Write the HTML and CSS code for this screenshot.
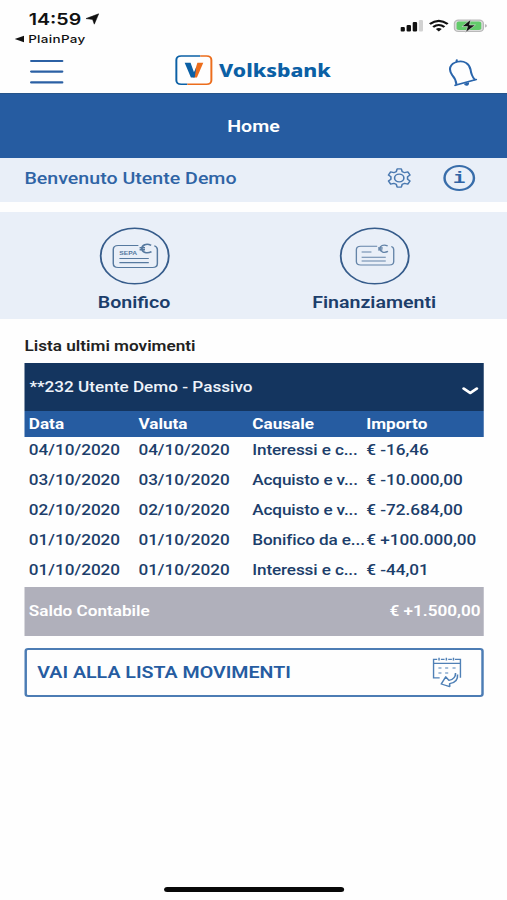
FILE: index.html
```
<!DOCTYPE html>
<html lang="it">
<head>
<meta charset="utf-8">
<meta name="viewport" content="width=device-width, initial-scale=1">
<title>Volksbank</title>
<link rel="stylesheet" href="styles.css">
</head>

<body>
<div class="screen">

  <div class="status">
    <div class="status-left">
      <div class="clock">14:59
        <svg width="11" height="12" viewBox="0 0 11 12"><path d="M0.2 5.6 L10.6 0.8 L7 11.2 L5.6 6.4 Z" fill="#111" stroke="#111" stroke-width="0.5"/></svg>
      </div>
      <div class="back">
        <svg width="8" height="8" viewBox="0 0 8 8"><path d="M0 4 L7.6 0.7 V7.3 Z" fill="#111"/></svg>
        PlainPay
      </div>
    </div>
    <svg class="status-icons" width="71" height="14" viewBox="0 0 71 14">
      <g fill="#111">
        <rect x="0" y="8" width="3.6" height="4.6" rx="1"/>
        <rect x="5" y="6" width="3.6" height="6.6" rx="1"/>
        <rect x="10" y="3" width="3.6" height="9.6" rx="1"/>
      </g>
      <rect x="15" y="1" width="3.4" height="11.6" rx="1" fill="#d2d2d2"/>
      <g fill="none" stroke="#111" stroke-width="2.1">
        <path d="M24 5 Q31.3 -1.4 38.6 5"/>
        <path d="M26.7 8 Q31.3 4 35.9 8"/>
      </g>
      <path d="M31.3 12.6 L28.9 10 Q31.3 8.2 33.7 10 Z" fill="#111"/>
      <rect x="44.1" y="1.1" width="23.6" height="11.4" rx="3.2" fill="#ddd" stroke="#b9b9b9" stroke-width="1.1"/>
      <rect x="45.8" y="2.6" width="20.2" height="8.4" rx="1.8" fill="#62cb6a"/>
      <path d="M69 5 Q70.6 5.4 70.6 6.8 Q70.6 8.2 69 8.6 Z" fill="#b9b9b9"/>
      <path d="M57.4 0.4 L50.2 7.6 H54.8 L53.2 13.4 L61.2 6 H56.4 Z" fill="#111" stroke="#eee" stroke-width="0.5"/>
    </svg>
  </div>

  <div class="topbar">
    <svg width="28" height="26" viewBox="0 0 28 26"><path d="M1.6 2H26.8 M1.6 12.6H26.8 M1.6 23.4H26.8" stroke="#2b60a4" stroke-width="2.2" stroke-linecap="round"/></svg>
    <div class="logo">
      <svg width="31" height="31" viewBox="0 0 31 31">
        <g fill="none" stroke-width="1.6">
          <path d="M20.5 1 H5 Q1 1 1 5 V25.3 Q1 29.3 5 29.3 H10" stroke="#0b60a5"/>
          <path d="M20.5 1 H25.6 Q29.6 1 29.6 5 V25.3 Q29.6 29.3 25.6 29.3 H10" stroke="#ec6d1c"/>
        </g>
        <path d="M18.2 7.8 H23 L17.8 22.6 H14.4 Z" fill="#ec6d1c"/>
        <path d="M7.8 7.8 H12.6 L15.4 17.2 L17.2 12.5 L16 22.6 H12.9 Z" fill="#0b60a5"/>
      </svg>
      <span>Volksbank</span>
    </div>
    <svg class="bell" width="24" height="28" viewBox="0 0 24 28">
      <g fill="none" stroke="#2b66ac" stroke-width="1.7" stroke-linecap="round" stroke-linejoin="round">
        <path d="M5.7 26.3 L22.8 20.5"/>
        <path d="M6.7 25.5 Q6.2 20 3.2 16 C-0.3 10 1.7 4.5 7.4 2.8 C13 1 17.3 5 18.2 10.5 Q19 17 21.6 20.5"/>
        <path d="M6.8 2.6 L7 1.2"/>
      </g>
      <path d="M12.7 24.7 L17 23.2 Q17.2 26.3 15.3 26.7 Q13.5 27 12.7 24.7Z" fill="#2b66ac"/>
    </svg>
  </div>

  <div class="title">Home</div>

  <div class="welcome">
    <span>Benvenuto Utente Demo</span>
    <svg class="gear" width="20" height="20" viewBox="0 0 20 20">
      <g fill="none" stroke="#4a79b0" stroke-width="1.3" stroke-linejoin="round">
        <path d="M8.3 .9 H11.7 L12.4 3.6 L14.4 4.7 L17 3.9 L18.8 7 L16.8 8.8 V11.2 L18.8 13 L17 16.1 L14.4 15.3 L12.4 16.4 L11.7 19.1 H8.3 L7.6 16.4 L5.6 15.3 L3 16.1 L1.2 13 L3.2 11.2 V8.8 L1.2 7 L3 3.9 L5.6 4.7 L7.6 3.6 Z"/>
        <circle cx="10" cy="10" r="3.8"/>
      </g>
    </svg>
    <div class="info">i</div>
  </div>

  <div class="actions">
    <div class="action">
      <svg width="58" height="58" viewBox="0 0 58 58">
        <circle cx="29" cy="29" r="27.8" fill="none" stroke="#365c8b" stroke-width="1.5"/>
        <g fill="none" stroke="#56799f" stroke-width="1.2">
          <path d="M32 18.5 H15.5 Q11.5 18.5 11.5 22.5 V36.5 Q11.5 40.5 15.5 40.5 H43.5 Q47.5 40.5 47.5 36.5 V22.5 Q47.5 19.8 45 18.7"/>
          <path d="M16.5 31.5 H40.5 M16.5 35.7 H40.5"/>
          <path d="M42.4 18.4 C38.5 15.9 34.9 18 34.9 21.7 C35 25.5 39 27 42.7 24.6 M33 20.7 H37.4 M33 22.8 H37.4" stroke-width="1.5"/>
        </g>
        <text x="16.4" y="27.6" class="sepa">SEPA</text>
      </svg>
      <span>Bonifico</span>
    </div>
    <div class="action">
      <svg width="58" height="58" viewBox="0 0 58 58">
        <circle cx="29" cy="29" r="27.8" fill="none" stroke="#365c8b" stroke-width="1.5"/>
        <g fill="none" stroke="#6484a8" stroke-width="1.1">
          <path d="M31 19.3 H17.5 Q14 19.3 14 22.8 V34.5 Q14 38 17.5 38 H41 Q44.5 38 44.5 34.5 V22.8 Q44.5 20 42.5 19.5"/>
          <path d="M18.3 25 H26.3 M18.3 30.3 H38 M18.3 34 H38"/>
          <path d="M39.6 19 C36 16.8 33.2 18.9 33.2 21.9 C33.5 25.2 36.8 26.2 39.8 24.4 M31.7 21 H35.5 M31.7 22.9 H35.3" stroke-width="1.3"/>
        </g>
      </svg>
      <span>Finanziamenti</span>
    </div>
  </div>

  <div class="movements">
    <h2>Lista ultimi movimenti</h2>
    <div class="account">
      <span>**232 Utente Demo - Passivo</span>
      <svg width="14" height="10" viewBox="0 0 14 10"><path d="M1.6 2.5 L7 7 L12.4 2.5" fill="none" stroke="#fff" stroke-width="2.4" stroke-linecap="round" stroke-linejoin="round"/></svg>
    </div>
    <div class="row head"><span>Data</span><span>Valuta</span><span>Causale</span><span>Importo</span></div>
    <div class="row"><span>04/10/2020</span><span>04/10/2020</span><span class="cause">Interessi e c...</span><span>€ -16,46</span></div>
    <div class="row"><span>03/10/2020</span><span>03/10/2020</span><span class="cause">Acquisto e v...</span><span>€ -10.000,00</span></div>
    <div class="row"><span>02/10/2020</span><span>02/10/2020</span><span class="cause">Acquisto e v...</span><span>€ -72.684,00</span></div>
    <div class="row"><span>01/10/2020</span><span>01/10/2020</span><span class="cause">Bonifico da e...</span><span>€ +100.000,00</span></div>
    <div class="row"><span>01/10/2020</span><span>01/10/2020</span><span class="cause">Interessi e c...</span><span>€ -44,01</span></div>
    <div class="balance"><span>Saldo Contabile</span><span>€ +1.500,00</span></div>
    <div class="button">
      <span>VAI ALLA LISTA MOVIMENTI</span>
      <svg width="24" height="32" viewBox="0 0 24 32">
        <g fill="none" stroke="#4f80b6" stroke-width="1.2">
          <path d="M6 20.8 H1 V2.3 H4 M7 2.3 H10 M13 2.3 H16 M18.5 2.3 H23 V20.8 M1 6.3 H23"/>
          <path d="M5.5 .8 V3.5 M11.5 .8 V3.5 M17.3 .8 V3.5"/>
          <path d="M5 11 H7.5 M10.5 11 H13 M16.5 11 H19 M5 16 H7.5 M10.5 16 H13"/>
          <path d="M19 16 C19 20.5 17 22.6 13.6 23.4 L11 19.8 L7.3 27 L14.2 29.6 L14.2 26.6 C18.5 25.8 21 22.5 20.6 17.5" stroke-width="1.3" stroke-linejoin="round"/>
        </g>
      </svg>
    </div>
  </div>

  <div class="home-bar"></div>
</div>
</body>

</html>
```
FILE: styles.css
```
html, body {
  margin: 0;
  padding: 0;
  width: 507px;
  height: 900px;
  overflow: hidden;
  background: #fff;
}

/* phone layout is 414px wide, widened to fill the window */
.screen {
  display: flex;
  flex-direction: column;
  width: 414px;
  height: 900px;
  transform: scaleX(1.22464);
  transform-origin: 0 0;
  font-family: Roboto, "Liberation Sans", sans-serif;
  font-size: 14px;
  font-weight: 500;
  color: #1c3e6b;
  background: #fefefe;
}

svg {
  display: block;
  flex: none;
}

.status {
  display: flex;
  justify-content: space-between;
  height: 51px;
  padding: 0 16.5px 0 12px;
  box-sizing: border-box;
  font-family: Inter, sans-serif;
  color: #111;
}

.clock {
  display: flex;
  align-items: center;
  gap: 4px;
  height: 20px;
  padding: 9px 0 0 11.5px;
  font-size: 16px;
  font-weight: 600;
}

.back {
  display: flex;
  align-items: center;
  gap: 3px;
  height: 17px;
  padding-top: 1px;
  font-size: 11px;
  font-weight: 500;
  letter-spacing: 0.25px;
}

.status-icons {
  margin-top: 19px;
}

.topbar {
  display: flex;
  align-items: center;
  justify-content: space-between;
  height: 42px;
  padding: 0 24px;
}

.logo {
  display: flex;
  align-items: center;
  gap: 5px;
  margin: -3px 5px 0 0;
  font-family: "Noto Sans", sans-serif;
  font-size: 17.3px;
  font-weight: 800;
  color: #0b60a5;
}

.bell {
  margin-top: 2px;
}

.title {
  height: 65px;
  line-height: 65px;
  box-sizing: border-box;
  border-top: 1px solid #26548a;
  background: #265ca1;
  color: #fff;
  font-size: 16px;
  font-weight: 600;
  text-align: center;
}

.welcome {
  display: flex;
  align-items: center;
  height: 44px;
  padding: 0 26px 4px 20px;
  box-sizing: border-box;
  background: #e9eff8;
  color: #2f64a5;
  font-size: 16px;
}

.gear {
  margin-left: auto;
}

.info {
  width: 26px;
  height: 26px;
  margin-left: 26px;
  box-sizing: border-box;
  border: 2px solid #386daa;
  border-radius: 50%;
  font: bold 17px/23px "Liberation Mono", monospace;
  text-align: center;
}

.actions {
  display: flex;
  height: 107px;
  margin-top: 10px;
  padding: 0 10.5px 0 11.5px;
  background: #e9eff8;
}

.action {
  display: flex;
  flex: 1;
  flex-direction: column;
  align-items: center;
  padding-top: 15px;
  font-size: 16px;
  font-weight: 600;
  line-height: 36px;
}

.sepa {
  font: bold 5.5px "Liberation Sans", sans-serif;
  fill: #56799f;
}

.movements {
  padding: 0 19.5px 0 20px;
}

h2 {
  margin: 0;
  height: 44px;
  line-height: 55px;
  font-size: 14px;
  font-weight: 600;
  color: #222;
}

.account {
  display: flex;
  align-items: center;
  justify-content: space-between;
  height: 48px;
  padding: 0 4px;
  background: #14355f;
  color: #eef3fa;
}

.account svg {
  margin-top: 8px;
}

.row {
  display: grid;
  grid-template-columns: 89.5px 93px 93px 1fr;
  height: 30px;
  padding-left: 3.5px;
  line-height: 26px;
  white-space: nowrap;
}

.cause {
  letter-spacing: -0.1px;
}

.head {
  height: 26px;
  background: #265ca1;
  color: #fff;
  font-weight: 700;
}

.balance {
  display: flex;
  justify-content: space-between;
  height: 49px;
  padding: 0 2px 0 3.5px;
  line-height: 49px;
  background: #b0b0bb;
  color: #fff;
  font-weight: 600;
}

.button {
  display: flex;
  align-items: center;
  justify-content: space-between;
  height: 49px;
  margin-top: 12px;
  padding: 0 16px 0 8.5px;
  box-sizing: border-box;
  border: 2px solid #4c7cb4;
  border-radius: 3px;
  color: #265ca1;
  font-size: 16px;
  font-weight: 600;
}

.home-bar {
  width: 147px;
  height: 5px;
  margin: auto auto 8px;
  border-radius: 3px;
  background: #080808;
}
```
